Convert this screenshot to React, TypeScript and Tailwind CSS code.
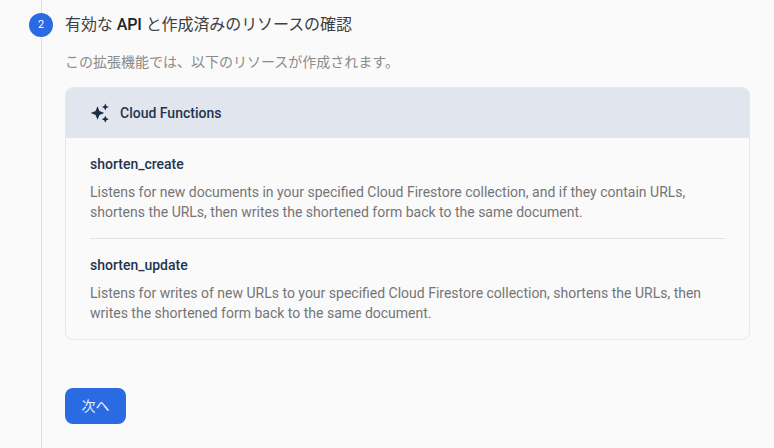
export default function App() {
  return (
    <div className="flex h-[448px] w-[774px] overflow-hidden bg-[#fafafb] font-['Roboto','Noto_Sans_CJK_JP',sans-serif]">
      <div className="ml-[29px] flex w-6 flex-col items-center">
        <div className="h-[13px] w-px bg-[#dadce0]" />
        <div className="flex h-6 w-6 shrink-0 items-center justify-center rounded-full bg-[#2a6ae3] text-[11px] text-white">2</div>
        <div className="w-px flex-1 bg-[#dadce0]" />
      </div>
      <div className="ml-3 flex w-[685px] flex-col">
        <h2 className="mt-[13px] h-6 text-[16px] leading-6 tracking-[-0.08px] text-[#3c4043]">有効な <span className="font-medium text-[#202124]">API</span> と作成済みのリソースの確認</h2>
        <p className="mt-[15px] text-[14px] leading-5 text-[#8a8a8a]">この拡張機能では、以下のリソースが作成されます。</p>
        <div className="mt-[15px] h-[253px] overflow-hidden rounded-lg border border-[#e4e8f0]">
          <div className="-mx-px -mt-px flex h-[51px] items-center gap-[10px] bg-[#e1e5ed] pl-[25px] pt-px">
            <svg width="20" height="20" viewBox="0 0 20 20" fill="#1a2e47" aria-hidden="true">
              <path d="M7.5 3.2 9.4 8.1 14.3 10l-4.9 1.9L7.5 16.8 5.6 11.9 0.7 10l4.9-1.9Z" />
              <path d="M15.3 0.5 16.4 2.9 18.8 4 16.4 5.1 15.3 7.5 14.2 5.1 11.8 4 14.2 2.9Z" />
              <path d="M15.3 12.7 16.4 15.1 18.8 16.2 16.4 17.3 15.3 19.7 14.2 17.3 11.8 16.2 14.2 15.1Z" />
            </svg>
            <span className="text-[14px] font-medium text-[#1f3550]">Cloud Functions</span>
          </div>
          <div className="mx-6 flex flex-col">
            <div className="h-[101px] border-b border-[#e1e3e6] pt-4">
              <h3 className="text-[14px] leading-5 font-medium text-[#1f3550]">shorten_create</h3>
              <p className="mt-[8px] text-[14px] leading-5 text-[#757575]">Listens for new documents in your specified Cloud Firestore collection, and if they contain URLs, shortens the URLs, then writes the shortened form back to the same document.</p>
            </div>
            <div className="pt-4">
              <h3 className="text-[14px] leading-5 font-medium text-[#1f3550]">shorten_update</h3>
              <p className="mt-[8px] text-[14px] leading-5 text-[#757575]">Listens for writes of new URLs to your specified Cloud Firestore collection, shortens the URLs, then writes the shortened form back to the same document.</p>
            </div>
          </div>
        </div>
        <button className="mt-12 h-9 w-[61px] rounded-lg bg-[#2a6ae3] text-[14px] text-[#f0f4ff]">次へ</button>
      </div>
    </div>
  );
}
